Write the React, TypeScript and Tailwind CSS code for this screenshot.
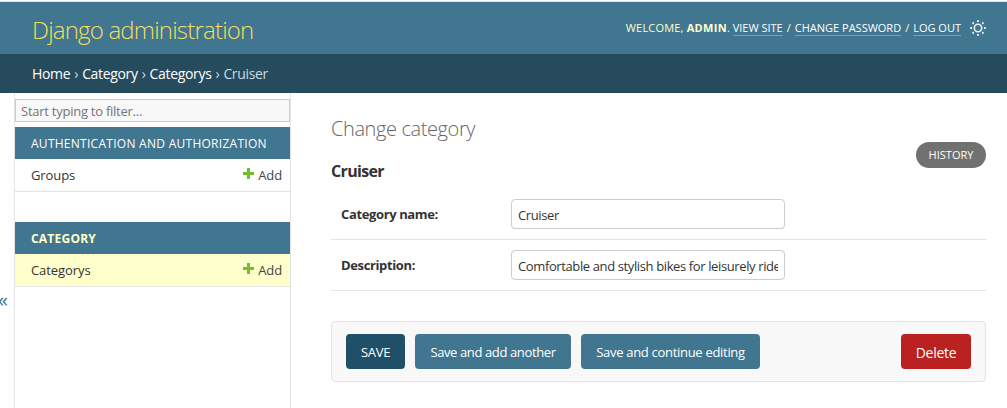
import React from "react";

function Plus() {
  return (
    <svg width="11" height="11" viewBox="0 0 11 11" className="mr-1 mb-1.5">
      <path d="M4 0h3v4h4v3H7v4H4V7H0V4h4z" fill="#70bf2b" />
    </svg>
  );
}

function Sun() {
  const rays = [0, 45, 90, 135, 180, 225, 270, 315];
  return (
    <svg width="16" height="16" viewBox="0 0 16 16" fill="none" stroke="#e9f1f5">
      <circle cx="8" cy="8" r="3.7" strokeWidth="1.6" />
      {rays.map((a) => (
        <path key={a} d="M8 0.2V2" strokeWidth="1.9" transform={`rotate(${a} 8 8)`} />
      ))}
    </svg>
  );
}

function AppModule({ title, model, current }: { title: string; model: string; current?: boolean }) {
  return (
    <section>
      <h2
        className={
          current
            ? "flex h-8 items-center bg-[#417690] px-4 pt-0.5 text-[12px] font-bold tracking-[0.22px] text-[#ffffcc]"
            : "flex h-8 items-center bg-[#417690] px-4 pt-0.5 text-[12px] tracking-[0.27px] text-white"
        }
      >
        <span>{title}</span>
      </h2>
      <div
        className={
          "flex h-[33px] items-center justify-between border-b border-[#e4e4e4] pt-0.5 pr-2 pl-4 text-[13px] " +
          (current ? "bg-[#ffffcc]" : "bg-white")
        }
      >
        <span className="font-medium tracking-[-0.08px]">{model}</span>
        <span className="flex items-center tracking-[-0.1px] text-[#444]">
          <Plus />
          Add
        </span>
      </div>
    </section>
  );
}

function Field({ label, value }: { label: string; value: string }) {
  return (
    <div className="flex h-[51px] items-center border-b border-[#e4e4e4] pl-2.5">
      <label className="w-[170px] pt-0.5 text-[13px] font-bold tracking-[-0.37px]">{label}</label>
      <div className="flex h-[30px] w-[274px] items-center rounded border border-[#ccc] px-1.5 pt-[3px] text-[13px]">
        <span className="w-full overflow-hidden tracking-[-0.38px] whitespace-nowrap">{value}</span>
      </div>
    </div>
  );
}

export default function App() {
  return (
    <div className="flex h-[408px] w-[1007px] flex-col overflow-hidden bg-white font-['Open_Sans','Noto_Sans',sans-serif] whitespace-nowrap text-[#333]">
      <div className="h-0.5 shrink-0 border-b border-[#e4e4e4]" />
      <header className="flex h-[52px] shrink-0 items-center justify-between bg-[#417690] pr-[21px] pl-8 text-[#ffffcc]">
        <h1 className="pt-1 text-[24px] leading-8 font-light tracking-[-0.8px] text-[#f5dd5d]">Django administration</h1>
        <div className="flex items-center text-[11px]">
          <span className="tracking-[0.2px]">WELCOME,&nbsp;</span>
          <b className="tracking-[0.3px]">ADMIN</b>
          <span>.&nbsp;</span>
          <a className="mt-px border-b border-white/30 leading-[14px] text-white">VIEW SITE</a>
          <span className="px-1">/</span>
          <a className="mt-px border-b border-white/30 leading-[14px] text-white">CHANGE PASSWORD</a>
          <span className="px-1">/</span>
          <a className="mt-px mr-[9px] border-b border-white/30 leading-[14px] text-white">LOG OUT</a>
          <Sun />
        </div>
      </header>
      <nav className="flex h-[39px] shrink-0 items-center gap-1 bg-[#264b5d] pl-8 text-[14px] tracking-[-0.33px] text-[#c4dce8]">
        <a className="font-medium text-white">Home</a>
        <span>›</span>
        <a className="font-medium text-white">Category</a>
        <span>›</span>
        <a className="font-medium text-white">Categorys</a>
        <span>›</span>
        <span>Cruiser</span>
      </nav>
      <div className="flex min-h-0 flex-1">
        <div className="flex w-3.5 shrink-0 items-center justify-end overflow-hidden pt-[98px] pr-1.5 text-[20px] leading-5 text-[#417690]">
          «
        </div>
        <aside className="w-[277px] shrink-0 border-x border-[#e4e4e4] pt-1.5">
          <div className="mb-[5px] flex h-[23px] items-center border border-[#ccc] bg-[#f8f8f8] px-[5px] pt-0.5 text-[13px] text-[#757575]">
            <span className="tracking-[-0.25px]">Start typing to filter...</span>
          </div>
          <div className="flex flex-col gap-[30px]">
            <AppModule title="AUTHENTICATION AND AUTHORIZATION" model="Groups" />
            <AppModule title="CATEGORY" model="Categorys" current />
          </div>
        </aside>
        <main className="flex-1 pt-[22px] pr-[21px] pl-10">
          <h1 className="h-[27px] text-[20px] leading-[27px] font-light tracking-[-0.4px] text-[#666]">Change category</h1>
          <div className="flex h-[47px] justify-between">
            <h2 className="pt-[17px] text-[16px] leading-6 font-bold tracking-[-0.65px]">Cruiser</h2>
            <a className="flex h-[26px] w-[70px] items-center justify-center rounded-full bg-[#717171] text-[11px] text-white">
              HISTORY
            </a>
          </div>
          <Field label="Category name:" value="Cruiser" />
          <Field label="Description:" value="Comfortable and stylish bikes for leisurely rides" />
          <div className="mt-[30px] flex h-[61px] items-center gap-2.5 rounded border border-[#e4e4e4] bg-[#f8f8f8] px-3.5 text-[13px] text-white">
            <button className="h-[35px] w-[59px] rounded bg-[#205067] pt-0.5 tracking-[-0.3px]">SAVE</button>
            <button className="h-[35px] w-[156px] rounded bg-[#417690] pt-0.5 tracking-[-0.38px]">Save and add another</button>
            <button className="h-[35px] w-[179px] rounded bg-[#417690] pt-0.5 tracking-[-0.3px]">Save and continue editing</button>
            <button className="ml-auto h-[35px] w-[70px] rounded bg-[#ba2121] pt-0.5 text-[14px] tracking-[-0.3px]">Delete</button>
          </div>
        </main>
      </div>
    </div>
  );
}
